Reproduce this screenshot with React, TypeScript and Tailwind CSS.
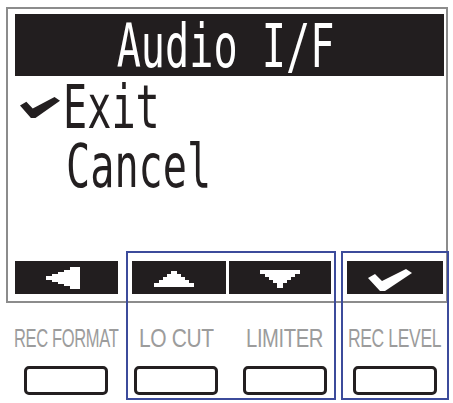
import React from "react";

const LCD = { fontFamily: '"DejaVu Sans Mono", monospace' };
const LABEL = { fontFamily: '"Liberation Sans", Arial, sans-serif' };

function LeftTri() {
  return (
    <svg width="34" height="22" viewBox="0 0 34 22" className="block">
      <polygon
        fill="#fff"
        points="0,9 6,9 6,7 12,7 12,5 18,5 18,3 24,3 24,0 34,0 34,22 24,22 24,19 18,19 18,17 12,17 12,15 6,15 6,13 0,13"
      />
    </svg>
  );
}

function UpTri() {
  return (
    <svg width="40" height="16" viewBox="0 0 40 16" className="block">
      <polygon
        fill="#fff"
        points="17,0 23,0 23,3 27,3 27,6 31,6 31,9 35,9 35,12 40,12 40,16 0,16 0,12 5,12 5,9 9,9 9,6 13,6 13,3 17,3"
      />
    </svg>
  );
}

function DownTri() {
  return (
    <svg width="40" height="18" viewBox="0 0 40 18" className="block">
      <polygon
        fill="#fff"
        points="0,0 40,0 40,4 35,4 35,7 31,7 31,10 27,10 27,13 23,13 23,18 17,18 17,13 13,13 13,10 9,10 9,7 5,7 5,4 0,4"
      />
    </svg>
  );
}

function Tick({ color, w, h }: { color: string; w: number; h: number }) {
  return (
    <svg width={w} height={h} viewBox="0 0 44 22" className="block" preserveAspectRatio="none">
      <polygon fill={color} points="0,9 7,5 14,12 38,0 44,4 17,22 12,22" />
    </svg>
  );
}

function Label({ text, scale }: { text: string; scale: string }) {
  return (
    <div className="h-[25px] flex justify-center whitespace-nowrap">
      <span className={`inline-block text-[25px] leading-[25px] text-[#9c9c9c] tracking-[-0.5px] ${scale}`} style={LABEL}>
        {text}
      </span>
    </div>
  );
}

function Key() {
  return <div className="w-[84px] h-[29px] border-[3px] border-[#231f20] rounded-[5px] bg-white" />;
}

export default function App() {
  return (
    <div className="relative w-[453px] h-[403px] bg-white overflow-hidden">
      {/* LCD screen */}
      <div className="ml-[6px] mt-[7px] w-[442px] h-[296px] border-2 border-[#8c8c8c] flex flex-col pl-[7px] pr-[2px] pt-[5px]">
        <div className="h-[62px] bg-[#221e1f] flex justify-center pr-[8px]">
          <span className="inline-block mt-[3px] text-[60px] leading-[58px] text-white scale-x-[0.67] whitespace-nowrap" style={LCD}>
            Audio I/F
          </span>
        </div>
        <div className="h-[59px] flex items-start">
          <div className="ml-[5px] mt-[21px]">
            <Tick color="#231f20" w={40} h={21} />
          </div>
          <span className="inline-block ml-[3px] mt-[3px] text-[60px] leading-[56px] text-[#231f20] origin-left scale-x-[0.67]" style={LCD}>
            Exit
          </span>
        </div>
        <div className="h-[59px] flex items-start">
          <span className="inline-block ml-[51px] mt-[3px] text-[60px] leading-[56px] text-[#231f20] origin-left scale-x-[0.67]" style={LCD}>
            Cancel
          </span>
        </div>
        <div className="mt-auto mb-[7px] h-[33px] flex">
          <div className="w-[103px] bg-[#221e1f] flex items-center justify-center pr-[8px]">
            <LeftTri />
          </div>
          <div className="ml-[14px] w-[94px] bg-[#221e1f] flex items-center justify-center pr-[10px] pt-[2px]">
            <UpTri />
          </div>
          <div className="ml-[3px] w-[102px] bg-[#221e1f] flex items-center justify-center pt-[2px]">
            <DownTri />
          </div>
          <div className="ml-[16px] w-[96px] bg-[#221e1f] flex items-center justify-center pr-[10px] pt-[4px]">
            <Tick color="#fff" w={44} h={22} />
          </div>
        </div>
      </div>

      {/* Key labels and keys */}
      <div className="mt-[23px] flex">
        <div className="ml-[12px] w-[108px]">
          <Label text="REC FORMAT" scale="scale-x-[0.66]" />
        </div>
        <div className="ml-[6px] w-[100px]">
          <Label text="LO CUT" scale="scale-x-[0.84]" />
        </div>
        <div className="ml-[9px] w-[100px]">
          <Label text="LIMITER" scale="scale-x-[0.81]" />
        </div>
        <div className="ml-[8px] w-[104px]">
          <Label text="REC LEVEL" scale="scale-x-[0.7]" />
        </div>
      </div>
      <div className="mt-[15px] flex">
        <div className="ml-[12px] w-[108px] flex justify-center">
          <Key />
        </div>
        <div className="ml-[6px] w-[100px] flex justify-center">
          <Key />
        </div>
        <div className="ml-[9px] w-[100px] flex justify-center">
          <Key />
        </div>
        <div className="ml-[8px] w-[104px] flex justify-center">
          <Key />
        </div>
      </div>

      {/* Key group outlines */}
      <div className="absolute left-[126px] top-[251px] w-[210px] h-[149px] border-2 border-[#3c4b9b]" />
      <div className="absolute left-[341px] top-[251px] w-[108px] h-[149px] border-2 border-[#3c4b9b]" />
    </div>
  );
}
